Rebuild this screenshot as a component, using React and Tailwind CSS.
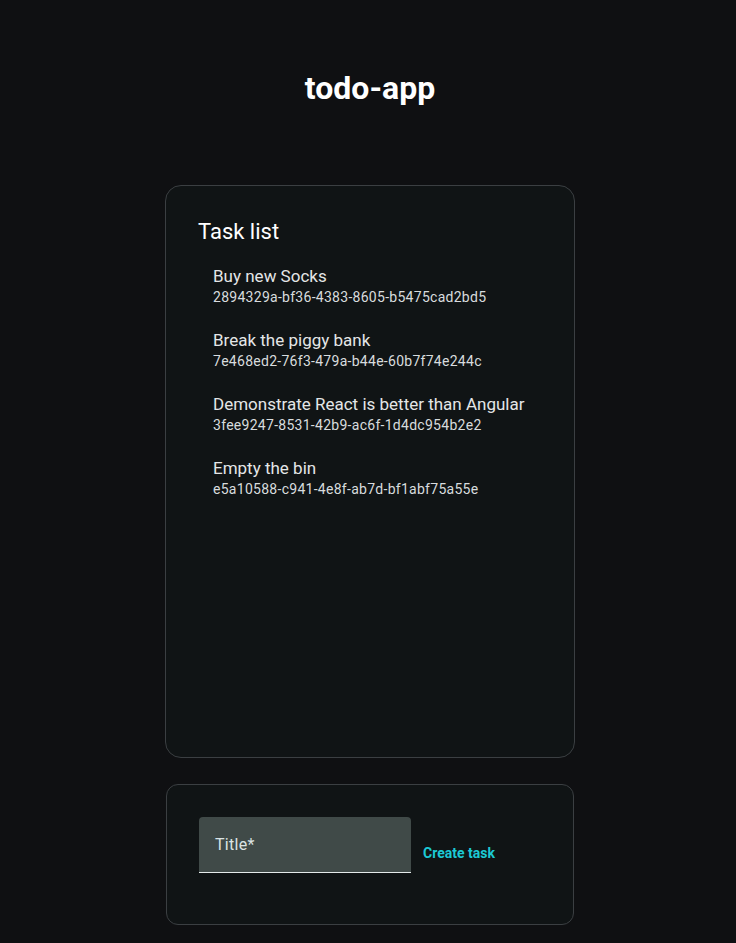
const tasks = [
  { title: 'Buy new Socks', id: '2894329a-bf36-4383-8605-b5475cad2bd5' },
  { title: 'Break the piggy bank', id: '7e468ed2-76f3-479a-b44e-60b7f74e244c' },
  { title: 'Demonstrate React is better than Angular', id: '3fee9247-8531-42b9-ac6f-1d4dc954b2e2' },
  { title: 'Empty the bin', id: 'e5a10588-c941-4e8f-ab7d-bf1abf75a55e' },
];

export default function App() {
  return (
    <div className="min-h-[943px] bg-[#0f1012] font-['Roboto',sans-serif] flex flex-col items-center pl-[4px]">
      <h1 className="mt-[70px] text-[32px] leading-[37px] font-bold text-white">todo-app</h1>

      {/* Task list card */}
      <section className="mt-[78px] w-[410px] h-[573px] rounded-[16px] border border-[#3b3f42] bg-[#101415] px-[32px] pt-[30px]">
        <h2 className="text-[22px] leading-[32px] text-white">Task list</h2>
        <ul className="mt-[6px]">
          {tasks.map((t) => (
            <li key={t.id} className="px-[15px] py-[11px]">
              <div className="text-[17px] leading-[22px] text-[#e4e6e7]">{t.title}</div>
              <div className="text-[14px] leading-[20px] tracking-[0.28px] text-[#d8dcde]">{t.id}</div>
            </li>
          ))}
        </ul>
      </section>

      {/* Create task card */}
      <section className="mt-[26px] w-[408px] h-[141px] rounded-[12px] border border-[#3b3f42] bg-[#101415] px-[32px] pt-[32px] flex items-start gap-[12px]">
        <div className="w-[212px] h-[56px] rounded-t-[4px] bg-[#404a48] border-b border-[#e4eaea] flex items-center px-[16px]">
          <span className="text-[16px] tracking-[0.3px] text-[#dbe3e4]">Title*</span>
        </div>
        <button className="mt-[27px] text-[14px] leading-[18px] font-bold text-[#1cc9d4]">Create task</button>
      </section>
    </div>
  );
}
